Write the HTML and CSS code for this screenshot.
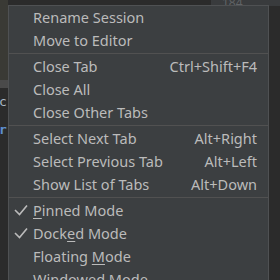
FILE: index.html
```html
<!DOCTYPE html>
<html>
  <head>
    <meta charset="utf-8">
    <title>Tab menu</title>
    <link rel="stylesheet" href="styles.css">
  </head>
  <body>
    <div id="backdrop">
      <div class="gutter">
        <div class="toolbar"></div>
        <div class="tabline"></div>
        <div class="code">
          <span class="plain">c</span>
          <span class="kw">r</span>
        </div>
      </div>
      <div class="editor">
        <div class="lineno">184</div>
      </div>
    </div>

    <ul id="menu">
      <li class="item"><span>Rename Session</span></li>
      <li class="item"><span>Move to Editor</span></li>
      <li class="sep"></li>
      <li class="item"><span>Close Tab</span><span class="key">Ctrl+Shift+F4</span></li>
      <li class="item"><span>Close All</span></li>
      <li class="item"><span>Close Other Tabs</span></li>
      <li class="sep"></li>
      <li class="item"><span>Select Next Tab</span><span class="key">Alt+Right</span></li>
      <li class="item"><span>Select Previous Tab</span><span class="key">Alt+Left</span></li>
      <li class="item"><span>Show List of Tabs</span><span class="key">Alt+Down</span></li>
      <li class="sep"></li>
      <li class="item checked">
        <svg class="check" width="14" height="12" viewBox="0 0 14 12"><polyline points="1,6 5.5,10.5 13,1.5"/></svg>
        <span><u>P</u>inned Mode</span>
      </li>
      <li class="item checked">
        <svg class="check" width="14" height="12" viewBox="0 0 14 12"><polyline points="1,6 5.5,10.5 13,1.5"/></svg>
        <span>Dock<u>e</u>d Mode</span>
      </li>
      <li class="item"><span>Floating <u>M</u>ode</span></li>
      <li class="item"><span>Windowed Mode</span></li>
    </ul>
  </body>
</html>
```

FILE: styles.css
```css
* {
  margin: 0;
  padding: 0;
}

html, body {
  width: 280px;
  height: 280px;
  overflow: hidden;
}

body {
  background: #2b2b2b;
  font-family: "Noto Sans", "Open Sans", sans-serif;
  font-size: 14.5px;
  color: #bbbbbb;
}

#backdrop {
  display: flex;
  height: 280px;
}

.gutter {
  width: 8px;
  display: flex;
  flex-direction: column;
}

.gutter .toolbar {
  height: 80px;
  background: #3a3a35;
}

.gutter .tabline {
  height: 8px;
  background: #4a4a4a;
}

.gutter .code {
  flex: 1;
  background: #2b2b2b;
  font-family: "DejaVu Sans Mono", monospace;
  font-size: 13px;
  line-height: 28px;
  display: flex;
  flex-direction: column;
  overflow: hidden;
}

.code .plain {
  color: #a9b7c6;
  text-indent: -1px;
}

.code .kw {
  color: #5f8fd0;
  font-weight: bold;
  text-indent: -1px;
}

.editor {
  flex: 1;
  background: #2b2b2b;
  display: flex;
  justify-content: flex-end;
}

.lineno {
  width: 58px;
  height: 6px;
  background: #393b3d;
  color: #606366;
  font-size: 12px;
  line-height: 6px;
  padding-left: 11px;
  overflow: hidden;
}

#menu {
  position: absolute;
  left: 8px;
  top: 5px;
  width: 259px;
  background: #3c3f41;
  border: 1px solid #4f5153;
  list-style: none;
}

#menu .item {
  height: 23px;
  line-height: 23px;
  padding: 0 11px 0 24px;
  display: flex;
  justify-content: space-between;
  align-items: center;
  position: relative;
  white-space: nowrap;
}

#menu .sep {
  height: 1px;
  margin: 1px 0;
  background: #515151;
}

#menu u {
  text-underline-offset: 2px;
}

.check {
  position: absolute;
  left: 5px;
  top: 5px;
  fill: none;
  stroke: #bbbbbb;
  stroke-width: 1.6;
}
```
